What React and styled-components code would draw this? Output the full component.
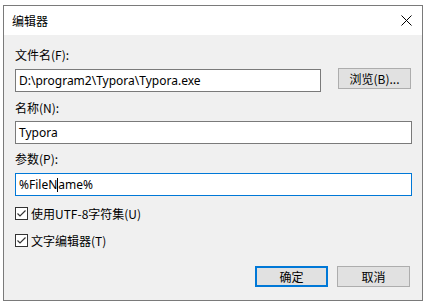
import React from "react";
import styled, { createGlobalStyle } from "styled-components";

const Global = createGlobalStyle`
  html, body { margin: 0; padding: 0; background: #ffffff; }
  body { font-family: "Noto Sans", "Noto Sans CJK SC", sans-serif; font-size: 12px; color: #000; }
`;

const Window = styled.div`
  margin: 5px 0 0 3px;
  width: 418px;
  height: 294px;
  border: 1px solid #7a7a7a;
  background: #f0f0f0;
  display: flex;
  flex-direction: column;
`;

const TitleBar = styled.div`
  height: 29px;
  background: #ffffff;
  display: flex;
  align-items: center;
  justify-content: space-between;
  padding: 0 10px 0 8px;
`;

const Title = styled.span`
  font-family: "Noto Sans CJK SC", sans-serif;
  font-size: 12px;
`;

const Body = styled.div`
  padding: 12px 10px 0 11px;
  display: flex;
  flex-direction: column;
`;

const Label = styled.div`
  height: 16px;
  line-height: 16px;
  margin-top: ${(p) => p.$mt || 0}px;
  font-family: "Noto Sans CJK SC", sans-serif;
  font-size: 12px;
`;

const Row = styled.div`
  display: flex;
  align-items: flex-start;
  gap: 17px;
  margin-top: ${(p) => p.$mt || 0}px;
`;

const Input = styled.div`
  box-sizing: border-box;
  width: ${(p) => p.$w}px;
  height: 23px;
  border: 1px solid ${(p) => (p.$focus ? "#0078d7" : "#7a7a7a")};
  background: #fff;
  padding: 0 3px;
  display: flex;
  align-items: center;
  font-family: "Noto Sans", sans-serif;
  font-size: 12px;
  white-space: nowrap;
`;

const Caret = styled.span`
  display: inline-block;
  width: 0;
  height: 14px;
  border-left: 1px solid #000;
  vertical-align: middle;
`;

const Button = styled.div`
  box-sizing: border-box;
  width: 73px;
  height: 21px;
  background: #e1e1e1;
  border: ${(p) => (p.$default ? "2px solid #0078d7" : "1px solid #adadad")};
  display: flex;
  align-items: center;
  justify-content: center;
  font-family: "Noto Sans CJK SC", sans-serif;
  font-size: 12px;
  margin-top: ${(p) => p.$mt || 0}px;
`;

const Check = styled.div`
  display: flex;
  align-items: center;
  gap: 3px;
  height: 16px;
  margin-top: ${(p) => p.$mt || 0}px;
  font-family: "Noto Sans CJK SC", sans-serif;
  font-size: 12px;
`;

const Box = styled.div`
  box-sizing: border-box;
  width: 13px;
  height: 13px;
  border: 1px solid #333;
  background: #fff;
  display: flex;
  align-items: center;
  justify-content: center;
`;

const Footer = styled.div`
  display: flex;
  justify-content: flex-end;
  gap: 9px;
  padding-right: 2px;
  margin-top: 18px;
`;

const CheckBox = ({ children, mt }) => (
  <Check $mt={mt}>
    <Box>
      <svg width="11" height="11" viewBox="0 0 11 11">
        <path d="M1.5 5.5 L4 8 L9.5 2.5" fill="none" stroke="#333" strokeWidth="1.2" />
      </svg>
    </Box>
    <span>{children}</span>
  </Check>
);

export default function App() {
  return (
    <>
      <Global />
      <Window>
        <TitleBar>
          <Title>编辑器</Title>
          <svg width="11" height="11" viewBox="0 0 11 11">
            <path d="M0.5 0.5 L10.5 10.5 M10.5 0.5 L0.5 10.5" stroke="#000" strokeWidth="1" />
          </svg>
        </TitleBar>
        <Body>
          <Label>文件名(F):</Label>
          <Row $mt={6}>
            <Input $w={306}>D:\program2\Typora\Typora.exe</Input>
            <Button $mt={-1}>浏览(B)...</Button>
          </Row>
          <Label $mt={8}>名称(N):</Label>
          <Row $mt={5}>
            <Input $w={397}>Typora</Input>
          </Row>
          <Label $mt={7}>参数(P):</Label>
          <Row $mt={6}>
            <Input $w={397} $focus>
              %FileN<Caret />ame%
            </Input>
          </Row>
          <CheckBox mt={9}>使用UTF-8字符集(U)</CheckBox>
          <CheckBox mt={11}>文字编辑器(T)</CheckBox>
          <Footer>
            <Button $default>确定</Button>
            <Button>取消</Button>
          </Footer>
        </Body>
      </Window>
    </>
  );
}
